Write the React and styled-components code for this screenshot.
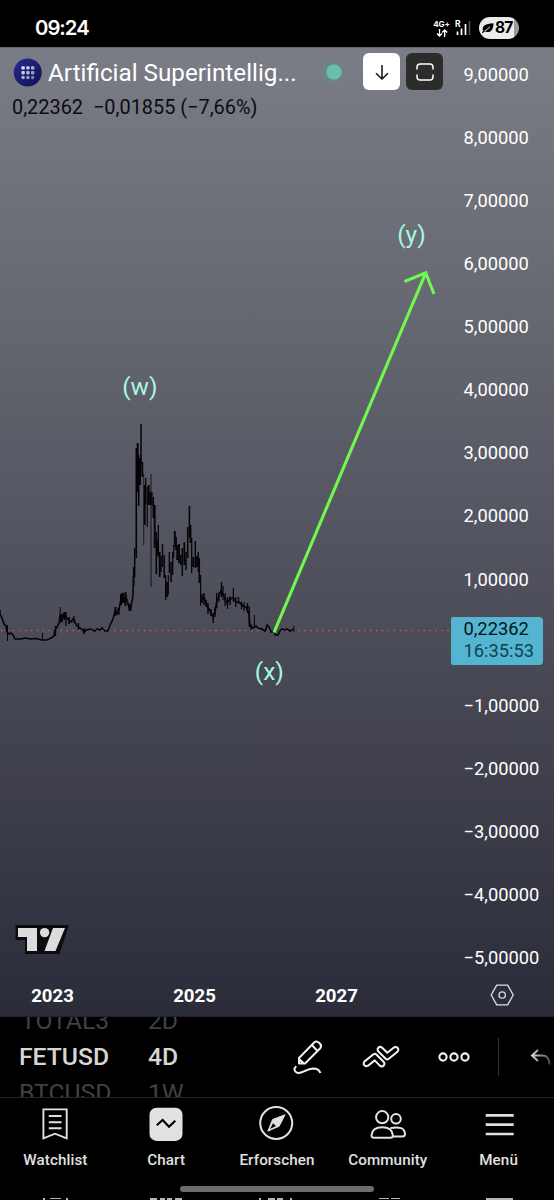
import React from "react";
import styled, { createGlobalStyle } from "styled-components";

const GlobalStyle = createGlobalStyle`
  body { margin: 0; background: #000; font-family: Roboto, "Liberation Sans", sans-serif; }
  * { box-sizing: border-box; }
  svg { display: block; flex: none; }
`;

const Screen = styled.div`
  width: 554px;
  height: 1200px;
  overflow: hidden;
  display: flex;
  flex-direction: column;
  background: #000;
  color: #fff;
`;

const StatusBar = styled.header`
  flex: none;
  height: 47px;
  padding: 9px 35px 0;
  display: flex;
  align-items: center;
  justify-content: space-between;
`;

const Clock = styled.span`
  font: 600 20.3px/24px Inter, Roboto, sans-serif;
  letter-spacing: -1px;
`;

const StatusIcons = styled.div`
  display: flex;
  align-items: center;
`;

const Network = styled.div`
  display: flex;
  flex-direction: column;
  align-items: center;
  gap: 1px;
  margin-right: 5px;
  font: 700 8px/8px Inter, sans-serif;
`;

const Battery = styled.div`
  width: 40px;
  height: 22px;
  margin-left: 8px;
  padding-left: 3px;
  display: flex;
  align-items: center;
  gap: 1px;
  border-radius: 11px;
  background: linear-gradient(90deg, #ebebeb 35px, #999 35px);
  color: #000;
  font: 700 15.5px/22px Inter, sans-serif;
  letter-spacing: -0.9px;
`;

const ChartPanel = styled.main`
  flex: none;
  height: 970px;
  display: grid;
  grid-template: 928px 42px / 450px 104px;
  border-top: 1px solid #66676f;
  border-bottom: 1px solid #22222a;
  background: linear-gradient(#7b7d86 0%, #2b2c39 100%);
`;

const Plot = styled.section`
  position: relative;
`;

const Legend = styled.div`
  position: absolute;
  inset: 4px 0 auto 12px;
`;

const TitleRow = styled.div`
  height: 40px;
  display: flex;
  align-items: center;
`;

const Title = styled.h1`
  flex: none;
  width: 268px;
  margin: 2px 0 0 6px;
  font-size: 24.25px;
  font-weight: 400;
  line-height: 36px;
  white-space: nowrap;
`;

const MarketDot = styled.span`
  flex: none;
  width: 32px;
  height: 32px;
  margin: 0 13px 0 2px;
  border-radius: 50%;
  background: radial-gradient(circle, #67bfaa 7.2px, #6a8584 8px, #71818480 12px, #73808600 16px);
`;

const SquareButton = styled.button`
  width: 37px;
  height: 37px;
  margin: -1px 6px 0 0;
  padding: 0;
  flex: none;
  display: grid;
  place-items: center;
  border: 0;
  border-radius: 6px;
  color: ${(p) => (p.$dark ? "#fff" : "#111")};
  background: ${(p) => (p.$dark ? "#2c2c2c" : "#fff")};
`;

const Quote = styled.div`
  display: flex;
  gap: 10px;
  margin-top: 3px;
  font-size: 19.9px;
  line-height: 26px;
  color: #0b0b10;
`;

const PriceAxis = styled.aside`
  position: relative;
  padding: 14.6px 0 0 13.6px;
  display: flex;
  flex-direction: column;
  gap: 39.14px;
`;

const Price = styled.span`
  height: 24px;
  font-size: 18.3px;
  line-height: 24px;
  white-space: nowrap;
`;

const PriceTag = styled.div`
  position: absolute;
  top: 569px;
  left: 1px;
  width: 92px;
  height: 48px;
  padding: 1px 0 0 12.5px;
  border-radius: 2px 4px 4px 2px;
  background: #53b5d0;
  color: #07141a;
  font-size: 18.3px;
  line-height: 22px;
`;

const Countdown = styled.div`
  color: #0d4356;
`;

const TimeAxis = styled.div`
  display: flex;
  gap: 42px;
  padding-left: 2.5px;
`;

const Year = styled.span`
  width: 100px;
  font-size: 18.6px;
  font-weight: 700;
  line-height: 40px;
  text-align: center;
`;

const AxisSettings = styled.div`
  display: flex;
  padding: 7px 0 0 40px;
`;

const Toolbar = styled.section`
  flex: none;
  height: 81px;
  display: flex;
  align-items: center;
  border-bottom: 1px solid #262626;
`;

const Wheel = styled.div`
  flex: none;
  width: ${(p) => p.$width}px;
  height: 80px;
  padding-left: 19px;
  display: flex;
  flex-direction: column;
  justify-content: center;
  overflow: hidden;
`;

const WheelItem = styled.span`
  flex: none;
  height: 36px;
  font-size: 24.7px;
  font-weight: ${(p) => (p.$active ? 500 : 400)};
  line-height: 36px;
  color: ${(p) => (p.$active ? "#d6d6d6" : "#414141")};
  text-indent: ${(p) => p.$indent || 0}px;
`;

const Tools = styled.div`
  flex: 1;
  display: flex;
  align-items: center;
`;

const Tool = styled.div`
  flex: none;
  width: 73.3px;
  display: flex;
  justify-content: center;
`;

const Divider = styled.span`
  flex: none;
  width: 1px;
  height: 38px;
  margin: 0 31px 0 7px;
  background: #333;
`;

const Nav = styled.nav`
  flex: none;
  height: 81px;
  display: grid;
  grid-template-columns: repeat(5, 1fr);
`;

const NavItem = styled.div`
  padding-top: 8px;
  display: flex;
  flex-direction: column;
  align-items: center;
  gap: 8px;
  color: #e1e1e1;
`;

const NavLabel = styled.span`
  font-size: 15.2px;
  font-weight: 500;
  line-height: 20px;
  letter-spacing: 0.1px;
`;

const HandleArea = styled.div`
  flex: none;
  height: 19px;
  padding-top: 7px;
  display: flex;
  justify-content: center;
`;

const Handle = styled.span`
  width: 194px;
  height: 6px;
  border-radius: 3px;
  background: #6c6c6c;
`;

const Footer = styled.footer`
  flex: none;
  height: 21px;
  display: flex;
  flex-direction: column;
  justify-content: space-between;
`;

const prices = [9, 8, 7, 6, 5, 4, 3, 2, 1, 0, -1, -2, -3, -4, -5];
const formatPrice = (v) => `${v < 0 ? "−" : ""}${Math.abs(v)},00000`;

const quietStart =
  "M0 610V614L2 618 4 624 6 626 7 632 9 634 11 633 13 635 15 639 20 639 26 638 30 639 36 638.5 42 640 47 640 51 638 54 636 55 630 57 627 59 623 60 616 62 620 64 614 66 617 68 619 71 622 73 619 75 622 77 626 80 628 83 630 84 633 86 630 90 629 95 631 97 629 100 630 102 628 105 631 108 631 110 625 112 621 113 619 115 611 117 613 119 610 120 604 122 595 124 601 126 597 128 604 130 609 132 602 133 595 133.5 575";
const quietEnd =
  "M202 600L204 597 207 606 210 611 213 617 215 612 217 600 219 596 221 591 224 596 227 603 230 599 233 598 236 602 239 602 243 606 246 607 249 614 250 626 253 628 256 626 258 628 262 629 265 631 266 629 267 625 269 627 271 632 274 631 275 635 278 635 280 631 282 629 285 630 287 629 290 631 292 630 294 629";

// x, high, low and optional stroke width of each price bar
const bars = [
  [7.5, 625, 641, 1], [42.5, 633, 640, 1], [60.3, 607, 623, 1], [66, 612, 626], [74, 616, 623], [55.5, 626, 636],
  [62, 614, 622, 2], [64.5, 612, 620, 2], [69, 617, 624, 1.6], [78.5, 623, 630], [84.5, 628, 633],
  [115.5, 607, 616, 2], [118.5, 608, 615, 2], [121, 594, 605, 2], [123, 593, 603, 2.4], [125.5, 592, 606, 2], [129, 603, 611],
  [131, 604, 611], [133.7, 567, 586, 1.5], [134.7, 548, 577, 1.5], [136.3, 448, 558, 1.6], [137.7, 443, 492, 2],
  [138.7, 455, 506, 1.6], [140, 458, 485, 2.2], [141, 424, 465, 1.5], [142.3, 462, 477, 1.8], [143.7, 473, 545, 0.7],
  [144.7, 485, 525, 1.8], [145.7, 478, 505, 1.3], [147.2, 487, 527, 1.2], [148.7, 485, 505, 2],
  [151, 474, 587, 0.8], [150.4, 492, 505, 2.4], [152, 492, 506, 1.2], [153.3, 497, 518, 1.5], [154.7, 505, 548, 1.9],
  [156.3, 532, 574, 1.6], [157.2, 540, 555, 2], [158.3, 525, 557, 1.3], [159.7, 552, 577, 1.8], [161, 556, 572, 1.4],
  [162.5, 544, 567, 1.3], [164.2, 555, 578, 1.5], [165.6, 575, 600, 1.3], [167, 582, 597, 1.8], [168.3, 575, 595, 1.1],
  [169.3, 552, 573, 1.3], [171, 562, 582, 1.6], [172.7, 552, 575, 1.3], [173.8, 545, 558, 1.2], [174.8, 531, 547, 1.9],
  [176, 537, 550, 1.8], [177.3, 545, 560, 2], [179, 544, 563, 1.8], [180.7, 555, 565, 1.8], [182.3, 548, 576, 1.5],
  [184.3, 542, 565, 1.7], [186, 552, 570, 1.5], [187.7, 527, 558, 1.5], [189.4, 506, 538, 1.6], [190.5, 525, 543, 1.8],
  [191.7, 538, 573, 1.3], [193.3, 557, 567, 2], [195.3, 541, 568, 1.4], [197, 556, 567, 1.8], [198.2, 552, 572, 1.3],
  [199.3, 558, 583, 1.5], [200.6, 575, 606, 1.2], [202, 594, 603, 1.6], [204, 593, 605, 1.4], [206, 600, 607, 1.4],
  [208, 603, 614, 1.4], [211, 609, 616, 1.4], [213.3, 613, 623, 1.4], [215, 607, 617, 1.4], [216.7, 593, 608, 1.4],
  [219, 592, 602, 1.3], [221.5, 582, 597, 1.3], [223, 586, 600, 1.2], [225, 593, 606, 1.3], [227.5, 597, 609, 1.3],
  [230, 596, 605, 1.4], [233.4, 588, 602, 1.2], [235.7, 597, 607, 1.4], [238.5, 597, 604, 1.3], [241.5, 602, 609, 1.3],
  [244, 602, 611, 1.2], [247.5, 603, 613, 1.3], [249.2, 606, 627, 1.3], [251, 624, 630, 1.3], [254.4, 615, 628, 1],
  [293.8, 626, 632, 1],
];

const PriceChart = () => (
  <svg width="450" height="928" viewBox="0 48 450 928" fill="none">
    <path d="M1 630.5H449" stroke="#d34f58" strokeWidth="1.4" strokeDasharray="1.6 4.35" />
    <g stroke="#050507">
      <path d={quietStart} strokeWidth="1.6" />
      <path d={quietEnd} strokeWidth="1.6" />
      {bars.map(([x, high, low, w = 1.3], i) => (
        <path key={i} d={`M${x} ${high}V${low}`} strokeWidth={w} />
      ))}
    </g>
    <path d="M274 632.5L425.7 272.8M404.5 281.5L425.7 272.8L434 294" stroke="#70f84f" strokeWidth="3.1" />
    <g fill="#a5f8dd" fontSize="24.5" fontFamily="Roboto, sans-serif" textAnchor="middle">
      <text x="139.8" y="395">(w)</text>
      <text x="269.3" y="679.5">(x)</text>
      <text x="411.5" y="242.8">(y)</text>
    </g>
    <g>
      <path d="M15.5 925H69L59.5 954H25V940H15.5Z" fill="#0c0c10" />
      <path d="M18 928H37V951H27V937H18ZM53 928H65L55.5 951H44.5Z" fill="#dcdcdc" />
      <circle cx="44.6" cy="932.6" r="4.7" fill="#dcdcdc" />
    </g>
  </svg>
);

const CoinLogo = () => (
  <svg width="30" height="30" viewBox="0 0 30 30">
    <defs>
      <linearGradient id="coin" x1="0" y1="0" x2="1" y2="1">
        <stop offset="0" stopColor="#292a93" />
        <stop offset="1" stopColor="#10104d" />
      </linearGradient>
    </defs>
    <circle cx="15.7" cy="15.5" r="14" fill="url(#coin)" />
    {[0, 1, 2].map((r) =>
      [0, 1, 2].map((c) => (
        <rect key={`${r}${c}`} x={9.4 + c * 4.8} y={9.2 + r * 4.8} width="3.4" height="3.4" rx={r === 2 ? 1.6 : 0.8}
          fill="#e4e4f2" opacity={1 - (r + c) * 0.12} />
      ))
    )}
  </svg>
);

const DownIcon = () => (
  <svg width="20" height="20" viewBox="0 0 20 20" fill="none" stroke="currentColor" strokeWidth="1.5">
    <path d="M10 3V17M4 11.2L10 17L16 11.2" />
  </svg>
);

const FrameIcon = () => (
  <svg width="22" height="22" viewBox="0 0 22 22" fill="none" stroke="currentColor" strokeWidth="1.5">
    <path d="M3 8.5V6.3Q3 3 6.3 3H15.7Q19 3 19 6.3V8.5M3 13.5V15.7Q3 19 6.3 19H15.7Q19 19 19 15.7V13.5" />
  </svg>
);

const DataArrows = () => (
  <svg width="12" height="8" viewBox="0 0 12 8" fill="none" stroke="#fff" strokeWidth="1.3">
    <path d="M3.5 0V7M1 4.5L3.5 7L6 4.5M8.7 8V1M6.2 3.5L8.7 1L11.2 3.5" />
  </svg>
);

const SignalIcon = () => (
  <svg width="16" height="18" viewBox="0 0 16 18">
    <text x="0" y="7.5" fill="#fff" fontSize="8.5" fontWeight="700" fontFamily="Inter, sans-serif">R</text>
    <path d="M2.5 12.5V16M6.5 9.5V16M10.5 5V16" stroke="#fff" strokeWidth="1.7" />
    <path d="M14.5 2V16" stroke="#555" strokeWidth="1.5" />
  </svg>
);

const LeafIcon = () => (
  <svg width="12" height="12" viewBox="0 0 12 12">
    <path d="M0.8 8.5C0 4 3 1.5 11.5 1.2C11.5 7 9 11.3 3.8 9.7Z" fill="#000" />
    <path d="M0 11Q4 8.5 8 4.8" stroke="#ebebeb" strokeWidth="1" fill="none" />
    <path d="M0 10.8L2.5 9" stroke="#000" strokeWidth="1.1" />
  </svg>
);

const HexIcon = () => (
  <svg width="24" height="24" viewBox="0 0 24 24" fill="none" stroke="#dedee3" strokeWidth="1.3">
    <path d="M6.7 2.2H17.7L23.2 12L17.7 21.8H6.7L1.2 12Z" />
    <circle cx="12.2" cy="12" r="3.2" />
  </svg>
);

const PencilIcon = () => (
  <svg width="32" height="36" viewBox="0 0 32 36" fill="none" stroke="#f1f1f1" strokeWidth="2" strokeLinejoin="round">
    <path d="M7 24.5V19L22.2 3.5Q24.5 1.5 27 3.8L28 4.8Q30.2 7.2 28 9.5L13 24.5ZM19.8 6L25.6 12M7 20L12 24.5" />
    <path d="M4.3 27.3C1.8 29.2 1.7 32.5 5.2 33.8C10 35 14 29.8 21 29.5C25 29.5 27.5 31 28.4 34" />
  </svg>
);

const PatternIcon = () => (
  <svg width="38" height="24" viewBox="0 0 38 24" fill="none" stroke="#f1f1f1" strokeWidth="2" strokeLinejoin="round">
    <path d="M2.6 16.4L11.5 9.3Q13 8.2 14.3 9.5L21.4 16.5C24 19.5 20.8 22.8 17.8 20.6L12.7 15.4L6.1 20.7C2.8 22.3 0.4 19 2.6 16.4Z" />
    <path d="M35.4 6.8L26.5 14Q25 15.1 23.7 13.8L16.6 6.8C14 3.8 17.2 0.5 20.2 2.7L25.3 7.8L31.9 2.5C35.2 0.9 37.6 4.2 35.4 6.8Z" />
  </svg>
);

const MoreIcon = () => (
  <svg width="32" height="12" viewBox="0 0 32 12" fill="none" stroke="#f1f1f1" strokeWidth="2.1">
    <circle cx="5" cy="6" r="3.6" />
    <circle cx="16" cy="6" r="3.6" />
    <circle cx="27" cy="6" r="3.6" />
  </svg>
);

const UndoIcon = () => (
  <svg width="24" height="18" viewBox="0 0 24 18" fill="none" strokeWidth="1.9">
    <defs>
      <linearGradient id="fade" gradientUnits="userSpaceOnUse" x1="1" y1="0" x2="20" y2="0">
        <stop offset="0" stopColor="#dedede" />
        <stop offset="1" stopColor="#4a4a4a" />
      </linearGradient>
    </defs>
    <path d="M8 2L2 7.5L8 13M2.5 7.5H12Q19.5 7.5 19.5 16.5" stroke="url(#fade)" />
  </svg>
);

const WatchlistIcon = () => (
  <svg width="36" height="36" viewBox="0 0 36 36" fill="none" stroke="currentColor" strokeWidth="1.9">
    <path d="M6.4 3.4H29.7V32.3L18 27.7L6.4 32.3ZM11.8 10H24.5M11.8 16.2H24.5M11.8 22.2H24.5" />
  </svg>
);

const ChartIcon = () => (
  <svg width="36" height="36" viewBox="0 0 36 36" fill="none">
    <rect x="1.5" y="1.7" width="33" height="33.2" rx="7" fill="currentColor" />
    <path d="M8.8 19.3L14.6 14L21 20.8L27.3 14.8" stroke="#000" strokeWidth="2.1" />
  </svg>
);

const CompassIcon = () => (
  <svg width="36" height="36" viewBox="0 0 36 36" fill="none" stroke="currentColor" strokeWidth="2">
    <circle cx="17.2" cy="17" r="16" />
    <path d="M26 8.8L20.2 20.2L8.8 25.2L13.6 13.5Z" fill="currentColor" strokeWidth="1" strokeLinejoin="round" />
    <path d="M14 17.2L17 20L11 23Z" fill="#000" stroke="none" />
  </svg>
);

const CommunityIcon = () => (
  <svg width="36" height="36" viewBox="0 0 36 36" fill="none" stroke="currentColor" strokeWidth="2">
    <circle cx="12.2" cy="11.2" r="6.1" />
    <circle cx="26" cy="12.8" r="4.8" />
    <path d="M4 31.8Q1.5 31.8 1.5 29.3Q2.2 21.2 12.2 21.2Q22.2 21.2 22.9 29.3Q22.9 31.8 20.4 31.8ZM20.5 22.1Q34.4 19.3 35 28Q35 30.4 32.7 30.4H23.3" />
  </svg>
);

const MenuIcon = () => (
  <svg width="36" height="36" viewBox="0 0 36 36" stroke="currentColor" strokeWidth="2.7">
    <path d="M4.7 9.3H32.7M4.7 18.6H32.7M4.7 28H32.7" />
  </svg>
);

const EdgeMarks = () => (
  <svg width="554" height="2" viewBox="0 0 554 2" fill="#b5b5b5">
    <path d="M43 0H45V2H43ZM50 0H61V1H50ZM66 0H68V2H66ZM150 0H157V2H150ZM160 0H165V2H160ZM167 0H172V2H167ZM175 0H182V2H175ZM259 0H261V2H259ZM268 0H275V2H268ZM277 0H283V2H277ZM290 0H292V2H290ZM379 0H389V1H379ZM391 0H400V1H391ZM486 0H513V2H486Z" />
  </svg>
);

const tabs = [
  ["Watchlist", WatchlistIcon],
  ["Chart", ChartIcon],
  ["Erforschen", CompassIcon],
  ["Community", CommunityIcon],
  ["Menü", MenuIcon],
];

export default function App() {
  return (
    <Screen>
      <GlobalStyle />
      <StatusBar>
        <Clock>09:24</Clock>
        <StatusIcons>
          <Network>4G+<DataArrows /></Network>
          <SignalIcon />
          <Battery><LeafIcon />87</Battery>
        </StatusIcons>
      </StatusBar>
      <ChartPanel>
        <Plot>
          <PriceChart />
          <Legend>
            <TitleRow>
              <CoinLogo />
              <Title>Artificial Superintellig...</Title>
              <MarketDot />
              <SquareButton aria-label="Down"><DownIcon /></SquareButton>
              <SquareButton $dark aria-label="Fullscreen"><FrameIcon /></SquareButton>
            </TitleRow>
            <Quote><span>0,22362</span><span>−0,01855 (−7,66%)</span></Quote>
          </Legend>
        </Plot>
        <PriceAxis>
          {prices.map((v) => <Price key={v}>{v === 0 ? "" : formatPrice(v)}</Price>)}
          <PriceTag>0,22362<Countdown>16:35:53</Countdown></PriceTag>
        </PriceAxis>
        <TimeAxis>
          <Year>2023</Year>
          <Year>2025</Year>
          <Year>2027</Year>
        </TimeAxis>
        <AxisSettings><HexIcon /></AxisSettings>
      </ChartPanel>
      <Toolbar>
        <Wheel $width={129}>
          <WheelItem $indent={2}>TOTAL3</WheelItem>
          <WheelItem $active>FETUSD</WheelItem>
          <WheelItem>BTCUSD</WheelItem>
        </Wheel>
        <Wheel $width={142}>
          <WheelItem>2D</WheelItem>
          <WheelItem $active>4D</WheelItem>
          <WheelItem>1W</WheelItem>
        </Wheel>
        <Tools>
          <Tool><PencilIcon /></Tool>
          <Tool><PatternIcon /></Tool>
          <Tool><MoreIcon /></Tool>
          <Divider />
          <UndoIcon />
        </Tools>
      </Toolbar>
      <Nav>
        {tabs.map(([label, Icon]) => (
          <NavItem key={label}><Icon /><NavLabel>{label}</NavLabel></NavItem>
        ))}
      </Nav>
      <Footer>
        <HandleArea><Handle /></HandleArea>
        <EdgeMarks />
      </Footer>
    </Screen>
  );
}
